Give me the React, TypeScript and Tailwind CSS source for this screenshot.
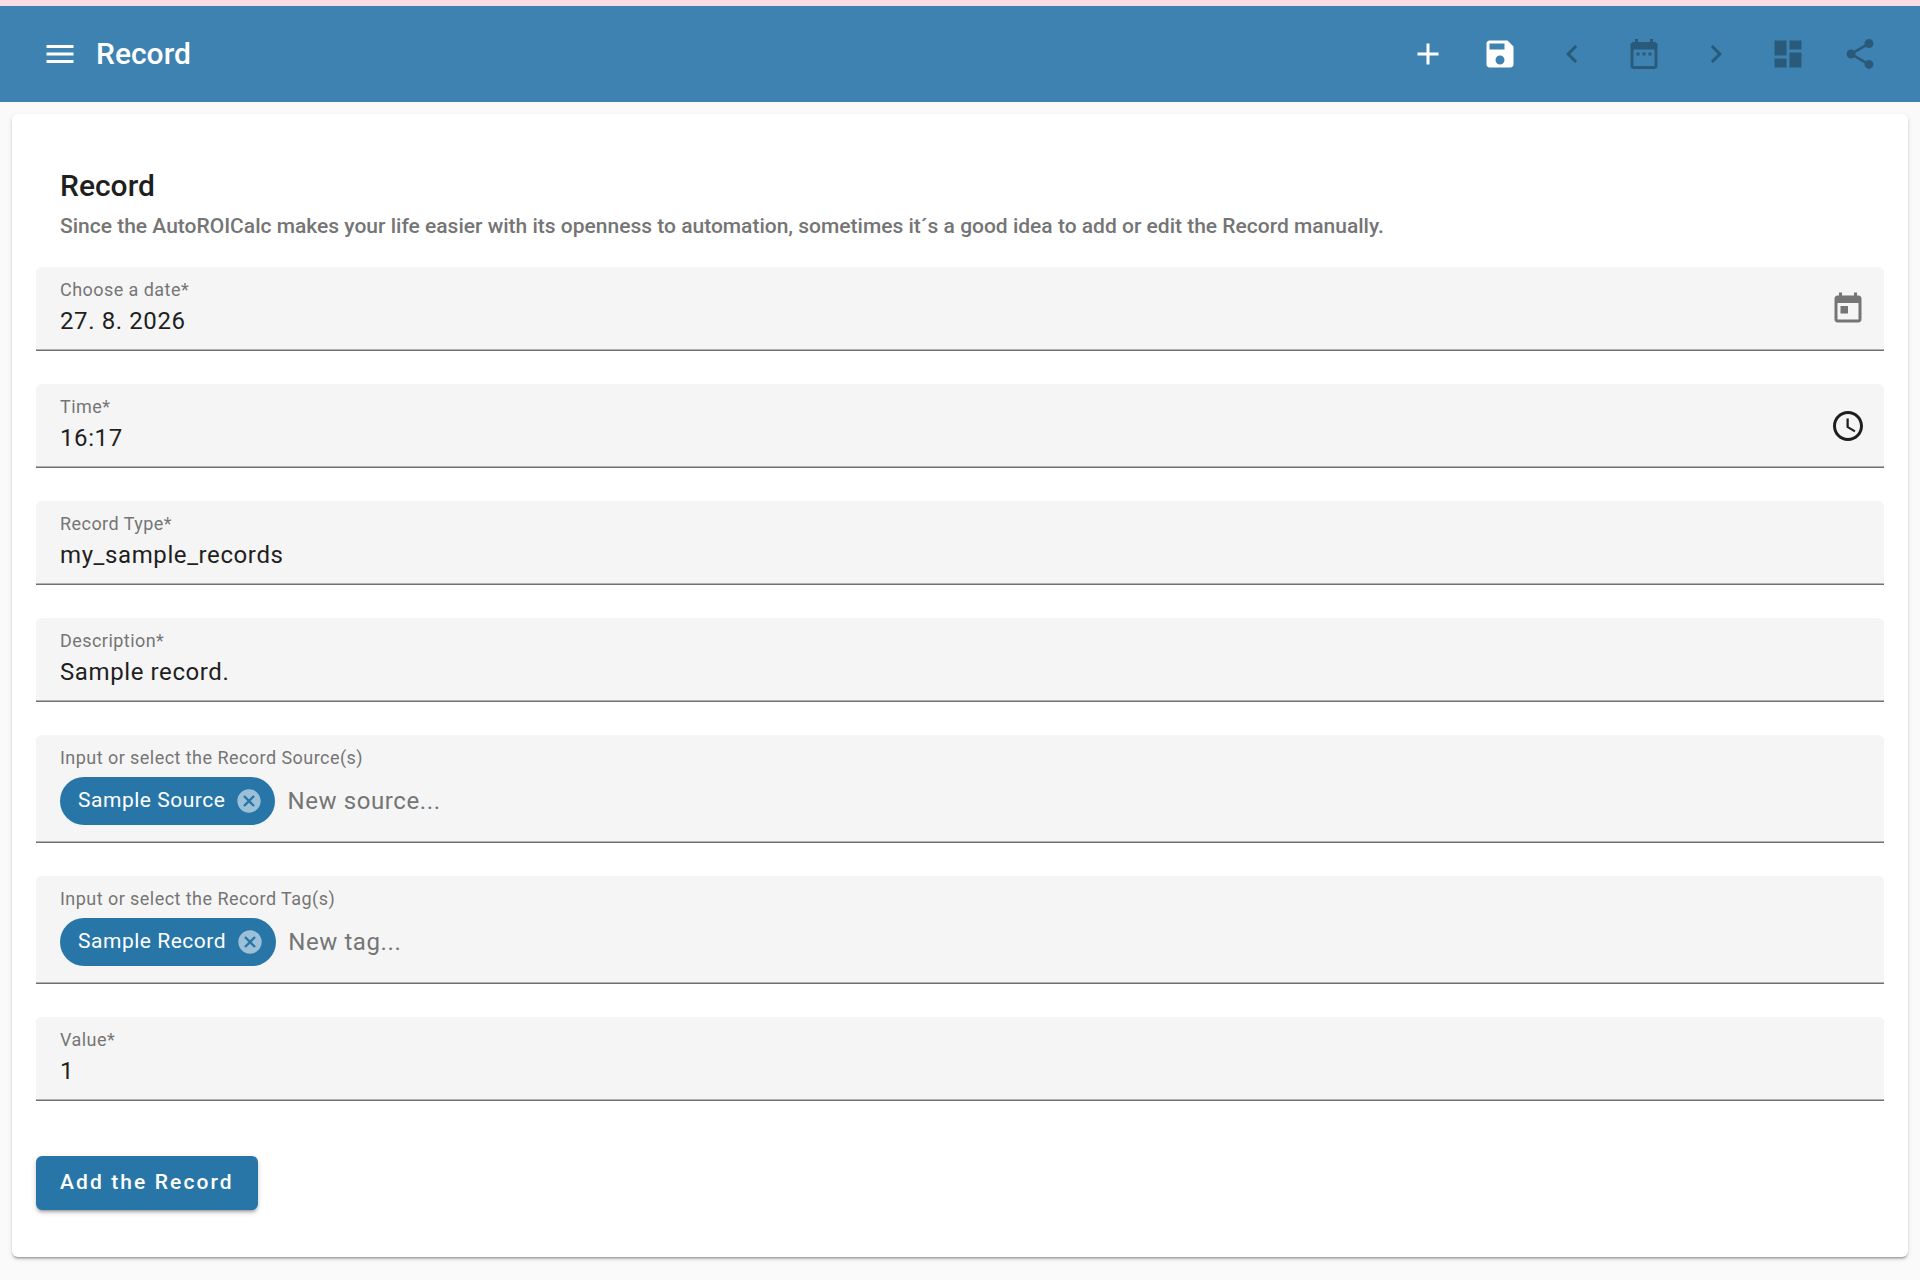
import { useId, type ReactNode } from "react";

const paths = {
  menu: "M3 18h18v-2H3v2zm0-5h18v-2H3v2zm0-7v2h18V6H3z",
  add: "M19 13h-6v6h-2v-6H5v-2h6V5h2v6h6v2z",
  save: "M17 3H5c-1.11 0-2 .9-2 2v14c0 1.1.89 2 2 2h14c1.1 0 2-.9 2-2V7l-4-4zm-5 16c-1.66 0-3-1.34-3-3s1.34-3 3-3 3 1.34 3 3-1.34 3-3 3zm3-10H5V5h10v4z",
  before: "M15.41 7.41L14 6l-6 6 6 6 1.41-1.41L10.83 12z",
  next: "M10 6L8.59 7.41 13.17 12l-4.58 4.59L10 18l6-6z",
  dateRange:
    "M9 11H7v2h2v-2zm4 0h-2v2h2v-2zm4 0h-2v2h2v-2zm2-7h-1V2h-2v2H8V2H6v2H5c-1.11 0-1.99.9-1.99 2L3 20c0 1.1.89 2 2 2h14c1.1 0 2-.9 2-2V6c0-1.1-.9-2-2-2zm0 16H5V9h14v11z",
  dashboard: "M3 13h8V3H3v10zm0 8h8v-6H3v6zm10 0h8V11h-8v10zm0-18v6h8V3h-8z",
  share:
    "M18 16.08c-.76 0-1.44.3-1.96.77L8.91 12.7c.05-.23.09-.46.09-.7s-.04-.47-.09-.7l7.05-4.11c.54.5 1.25.81 2.04.81 1.66 0 3-1.34 3-3s-1.34-3-3-3-3 1.34-3 3c0 .24.04.47.09.7L8.04 9.81C7.5 9.31 6.79 9 6 9c-1.66 0-3 1.34-3 3s1.34 3 3 3c.79 0 1.5-.31 2.04-.81l7.12 4.16c-.05.21-.08.43-.08.65 0 1.61 1.31 2.92 2.92 2.92 1.61 0 2.92-1.31 2.92-2.92s-1.31-2.92-2.92-2.92z",
  today:
    "M19 3h-1V1h-2v2H8V1H6v2H5c-1.11 0-1.99.9-1.99 2L3 19c0 1.1.89 2 2 2h14c1.1 0 2-.9 2-2V5c0-1.1-.9-2-2-2zm0 16H5V8h14v11zM7 10h5v5H7z",
  schedule:
    "M11.99 2C6.47 2 2 6.48 2 12s4.47 10 9.99 10C17.52 22 22 17.52 22 12S17.52 2 11.99 2zM12 20c-4.42 0-8-3.58-8-8s3.58-8 8-8 8 3.58 8 8-3.58 8-8 8zm.5-13H11v6l5.25 3.15.75-1.23-4.5-2.67z",
  cancel:
    "M12 2C6.47 2 2 6.47 2 12s4.47 10 10 10 10-4.47 10-10S17.53 2 12 2zm5 13.59L15.59 17 12 13.41 8.41 17 7 15.59 10.59 12 7 8.41 8.41 7 12 10.59 15.59 7 17 8.41 13.41 12 17 15.59z",
};

type IconName = keyof typeof paths;

function Icon({ name, className = "size-9" }: { name: IconName; className?: string }) {
  return (
    <svg viewBox="0 0 24 24" fill="currentColor" aria-hidden="true" className={className}>
      <path d={paths[name]} />
    </svg>
  );
}

function ToolbarButton({ icon, label, disabled }: { icon: IconName; label: string; disabled?: boolean }) {
  return (
    <button
      type="button"
      aria-label={label}
      disabled={disabled}
      className="flex size-18 items-center justify-center text-white disabled:text-[#295a7a]"
    >
      <Icon name={icon} />
    </button>
  );
}

const fieldBox =
  "flex items-center rounded-t-md border-b border-[#707070] bg-[#f5f5f5] pl-6 pr-[18px] shadow-[inset_0_-1px_0_#b2b2b2]";
const labelText = "block text-[18px] leading-[22px] tracking-wide text-[#757575]";
const inputText =
  "min-w-0 bg-transparent text-2xl leading-10 tracking-wide text-[#1f1f1f] outline-none placeholder:text-[#757575]";

function Field({ label, value, action }: { label: string; value: string; action?: ReactNode }) {
  const id = useId();
  return (
    <div className={fieldBox}>
      <div className="flex-1 pt-3 pb-[9px]">
        <label htmlFor={id} className={labelText}>
          {label}*
        </label>
        <input id={id} type="text" required defaultValue={value} className={`${inputText} block h-10 w-full`} />
      </div>
      {action}
    </div>
  );
}

function ChipField({ label, chip, placeholder }: { label: string; chip: string; placeholder: string }) {
  const id = useId();
  return (
    <div className={fieldBox}>
      <div className="flex-1 pt-3 pb-[17px]">
        <label htmlFor={id} className={labelText}>
          {label}
        </label>
        <div className="mt-2 flex items-center gap-3">
          <span className="flex h-12 items-center gap-2.5 rounded-full bg-[#2876a8] pr-3 pl-[18px] text-[21px] tracking-wide text-white">
            {chip}
            <button type="button" aria-label={`Remove ${chip}`} className="text-[#9cc0d8]">
              <Icon name="cancel" className="size-7" />
            </button>
          </span>
          <input id={id} type="text" placeholder={placeholder} className={`${inputText} h-10 flex-1`} />
        </div>
      </div>
    </div>
  );
}

export default function App() {
  return (
    <div className="min-h-screen bg-[#fafafa] font-['Roboto',sans-serif]">
      <div className="h-1.5 bg-[#fadde4]" />
      <header className="flex h-24 items-center bg-[#3d82b0] px-6 text-white">
        <ToolbarButton icon="menu" label="Menu" />
        <h1 className="flex-1 text-[30px] leading-12 font-medium">Record</h1>
        <ToolbarButton icon="add" label="Add" />
        <ToolbarButton icon="save" label="Save" />
        <ToolbarButton icon="before" label="Previous" disabled />
        <ToolbarButton icon="dateRange" label="Date range" disabled />
        <ToolbarButton icon="next" label="Next" disabled />
        <ToolbarButton icon="dashboard" label="Dashboard" disabled />
        <ToolbarButton icon="share" label="Share" disabled />
      </header>

      <main className="p-3">
        <form className="rounded-md bg-white px-6 pt-12 pb-[47px] shadow-[0_3px_2px_-2px_rgba(0,0,0,0.2),0_2px_2px_0_rgba(0,0,0,0.14),0_2px_5px_0_rgba(0,0,0,0.12)]">
          <div className="px-6 pb-6">
            <h2 className="text-[30px] leading-12 font-medium text-[#1f1f1f]">Record</h2>
            <p className="text-[21px] leading-[33px] font-medium text-[#757575]">
              Since the AutoROICalc makes your life easier with its openness to automation, sometimes it´s a good idea
              to add or edit the Record manually.
            </p>
          </div>

          <div className="flex flex-col gap-[33px]">
            <Field
              label="Choose a date"
              value="27. 8. 2026"
              action={
                <button type="button" aria-label="Open calendar" className="text-[#757575]">
                  <Icon name="today" />
                </button>
              }
            />
            <Field
              label="Time"
              value="16:17"
              action={
                <button type="button" aria-label="Open time picker" className="text-[#1f1f1f]">
                  <Icon name="schedule" />
                </button>
              }
            />
            <Field label="Record Type" value="my_sample_records" />
            <Field label="Description" value="Sample record." />
            <ChipField label="Input or select the Record Source(s)" chip="Sample Source" placeholder="New source..." />
            <ChipField label="Input or select the Record Tag(s)" chip="Sample Record" placeholder="New tag..." />
            <Field label="Value" value="1" />
          </div>

          <button
            type="submit"
            className="mt-[55px] block h-[54px] rounded-md bg-[#2876a8] px-6 text-[21px] font-medium tracking-widest text-white shadow-[0_4px_2px_-3px_rgba(0,0,0,0.2),0_3px_3px_0_rgba(0,0,0,0.14),0_2px_7px_0_rgba(0,0,0,0.12)]"
          >
            Add the Record
          </button>
        </form>
      </main>
    </div>
  );
}
